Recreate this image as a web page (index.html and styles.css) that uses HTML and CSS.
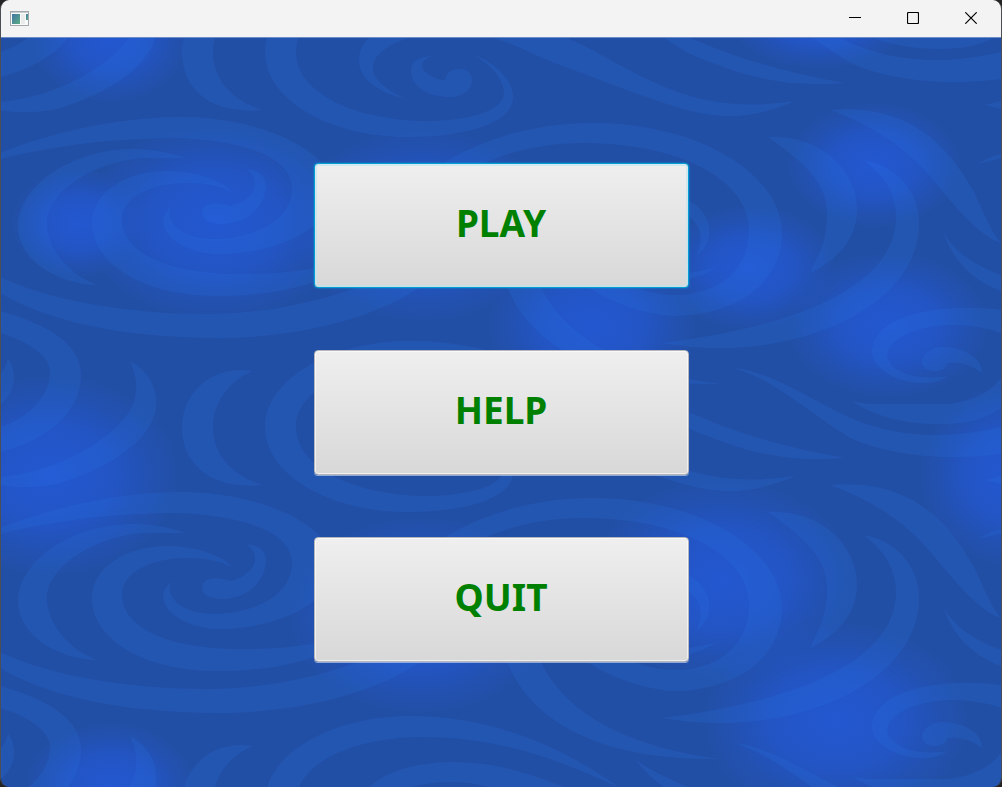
FILE: index.html
```
<!DOCTYPE html>
<html lang="en">
<head>
<meta charset="utf-8">
<title>Menu</title>
<link rel="stylesheet" href="styles.css">
</head>
<body>
<div class="window">
  <header class="titlebar">
    <svg class="app-icon" width="20" height="16" viewBox="0 0 20 16" aria-hidden="true">
      <defs>
        <linearGradient id="pane" x1="0" y1="0" x2="1" y2="1">
          <stop offset="0" stop-color="#4474a4"/>
          <stop offset="1" stop-color="#58ad83"/>
        </linearGradient>
      </defs>
      <rect x="1.5" y="0.5" width="18" height="14" fill="#fafafa" stroke="#a3a8ae"/>
      <path d="M2 1.5H19" stroke="#c9cdd2"/>
      <rect x="3" y="3" width="8" height="10" fill="url(#pane)"/>
      <rect x="12" y="3" width="4" height="10" fill="#e9ebec"/>
      <rect x="17" y="3" width="2" height="6" fill="url(#pane)"/>
    </svg>
    <div class="controls">
      <button class="control" type="button" aria-label="Minimize">
        <svg width="12" height="12" viewBox="0 0 12 12"><path d="M0 5.5H12"/></svg>
      </button>
      <button class="control" type="button" aria-label="Maximize">
        <svg width="12" height="12" viewBox="0 0 12 12"><rect x="0.5" y="0.5" width="11" height="11" rx="1"/></svg>
      </button>
      <button class="control" type="button" aria-label="Close">
        <svg width="12" height="12" viewBox="0 0 12 12"><path d="M0.3 0.3L11.7 11.7M11.7 0.3L0.3 11.7"/></svg>
      </button>
    </div>
  </header>
  <main class="stage">
    <svg class="backdrop" viewBox="1 38 1000 749" preserveAspectRatio="none" aria-hidden="true">
      <defs>
        <radialGradient id="glow">
          <stop offset="0" stop-color="#2358d3" stop-opacity="0.95"/>
          <stop offset="0.5" stop-color="#2357d0" stop-opacity="0.72"/>
          <stop offset="0.8" stop-color="#2356cc" stop-opacity="0.28"/>
          <stop offset="1" stop-color="#2356cc" stop-opacity="0"/>
        </radialGradient>
        <g id="swirls">
          <path d="M0 311C50 325 81 345 81 375C81 410 50 440 0 452V427C30 418 50 395 50 372C50 355 25 340 0 333Z"/>
          <path d="M8 358C18 372 16 392 0 405V374Q6 368 8 358Z"/>
          <path d="M130 361C150 372 158 390 156 408C152 440 110 468 57 484Q25 490 0 485V477C35 474 65 462 90 447C125 425 148 400 130 361Z"/>
          <path d="M253 371C205 364 182 400 182 427C182 465 212 490 262 485C232 475 213 455 213 427C213 402 230 380 253 371Z"/>
          <path d="M472 54C495 62 513 80 513 97C513 125 460 137 407 137C330 137 265 100 265 52C265 5 330 -34 410 -34C490 -34 560 -5 620 38C560 10 500 -13 423 -13C350 -13 296 15 296 52C296 95 360 121 427 121C465 121 504 112 504 93C504 80 492 65 472 54Z"/>
          <path d="M406 99C375 92 359 77 359 60C359 30 405 12 453 12C500 12 540 28 567 38C600 52 620 68 667 88Q725 112 795 101Q745 123 700 113C655 103 600 79 560 65C530 55 500 32 450 32C415 32 373 46 373 68C373 80 387 90 406 99Z"/>
          <path d="M635 9C650 22 690 38 720 50C760 65 800 75 845 83C780 88 745 75 710 62C680 52 650 30 635 9Z"/>
          <path d="M432 56C418 57 411 62 411 70C411 88 430 97 450 97C464 97 472 89 472 80C472 72 466 69 459 69C450 69 446 74 445 80C435 80 423 73 422 66Q422 60 432 56Z"/>
          <path d="M0 153C50 133 117 117 183 117C250 117 330 145 335 190C330 235 265 254 220 254C180 254 148 227 171 207C164 224 185 239 213 239C245 239 292 225 292 188C292 153 230 139 173 138C100 139 50 147 0 159Z"/>
          <path d="M185 158C175 154 155 149 133 149C70 149 18 187 18 227C18 258 55 284 97 285C70 275 47 250 47 223C47 190 100 158 150 158Z"/>
          <path d="M232 192C220 178 190 171 167 171C125 171 92 193 92 223C92 265 145 296 217 296C275 296 325 285 370 255L365 250C335 267 295 274 250 274C170 276 122 253 122 220C122 195 155 183 187 183Q215 183 232 192Z"/>
          <path d="M247 169C260 171 266 176 266 187C264 208 246 224 222 224C208 224 202 219 202 212C203 203 215 201 230 206C248 203 266 185 247 169Z"/>
          <path d="M0 277C50 301 130 314 208 314C270 314 340 298 385 275L440 270C400 312 310 338 217 338C120 338 45 320 0 293Z"/>
          <path d="M400 195C450 150 515 123 593 123C700 123 782 175 782 233C782 280 740 316 672 316C635 313 595 297 565 270L600 265C620 285 650 296 680 295C725 292 749 265 749 230C749 180 680 143 583 143C530 143 480 158 440 190Z"/>
          <path d="M500 260C510 325 570 386 720 384C610 370 545 325 532 260Z"/>
          <path d="M863 160C895 165 919 190 919 223C919 300 820 348 720 348Q690 348 662 343C800 326 896 285 896 217C896 195 885 175 863 160Z"/>
          <path d="M768 137C820 134 857 170 857 210C857 238 838 260 810 273C820 252 827 240 827 213C827 180 800 160 768 137Z"/>
          <path d="M830 110C920 102 955 160 973 190C985 215 990 230 1001 243C975 235 945 193 927 173C900 143 870 125 830 110Z"/>
          <path d="M944 233C955 253 975 265 1001 275V291C970 280 950 255 944 233Z"/>
          <path d="M1001 310C940 302 872 315 872 353C875 378 925 393 948 376C910 382 887 368 887 355C890 330 950 315 1001 333Z"/>
          <path d="M982 373C983 358 963 347 943 347C930 347 922 355 922 362C922 369 930 371 936 371Q944 371 948 363Q965 360 982 373Z"/>
          <path d="M852 401Q862 404 875 404H947Q985 400 1001 378V408C985 419 968 424 940 424C905 424 875 417 852 401Z"/>
          <path d="M733 368C763 370 800 392 830 408C870 430 925 445 1001 427V454C960 459 910 460 860 442C825 428 780 380 733 368Z"/>
          <path d="M985 105L1001 101V109Z"/>
          <path d="M978 164Q990 156 1002 154V158Z"/>
          <path d="M680 197C710 205 720 240 696 256C705 238 702 222 680 211Z"/>
          <path d="M680 274Q700 272 717 267Q700 278 680 281Z"/>
        </g>
      </defs>
      <g fill="url(#glow)">
        <ellipse cx="110" cy="38" rx="78" ry="64"/>
        <ellipse cx="78" cy="223" rx="66" ry="54"/>
        <ellipse cx="215" cy="222" rx="132" ry="98"/>
        <ellipse cx="423" cy="225" rx="130" ry="96"/>
        <ellipse cx="592" cy="325" rx="104" ry="80"/>
        <ellipse cx="750" cy="268" rx="86" ry="62"/>
        <ellipse cx="874" cy="165" rx="86" ry="62"/>
        <ellipse cx="888" cy="325" rx="100" ry="72"/>
        <ellipse cx="820" cy="20" rx="90" ry="48"/>
        <ellipse cx="50" cy="475" rx="128" ry="100"/>
        <ellipse cx="1010" cy="475" rx="90" ry="90"/>
        <ellipse cx="722" cy="580" rx="132" ry="100"/>
        <ellipse cx="836" cy="720" rx="132" ry="98"/>
        <ellipse cx="420" cy="615" rx="130" ry="98"/>
        <ellipse cx="110" cy="787" rx="84" ry="64"/>
      </g>
      <g class="swirl-layer">
        <use href="#swirls" y="-375"/>
        <use href="#swirls"/>
        <use href="#swirls" y="375"/>
        <use href="#swirls" y="750"/>
      </g>
    </svg>
    <nav class="menu" aria-label="Main menu">
      <button class="menu-button is-focused" type="button">PLAY</button>
      <button class="menu-button" type="button">HELP</button>
      <button class="menu-button" type="button">QUIT</button>
    </nav>
  </main>
</div>
</body>
</html>
```
FILE: styles.css
```
* {
  box-sizing: border-box;
}

body {
  margin: 0;
  background: #242424;
}

.window {
  display: flex;
  flex-direction: column;
  min-height: 100vh;
  border: solid #4b4e55;
  border-width: 0 1px;
  border-radius: 9px;
  overflow: hidden;
}

.titlebar {
  display: flex;
  align-items: center;
  justify-content: space-between;
  height: 38px;
  padding-left: 8px;
  background: #f3f3f3;
  border-bottom: 1px solid #6c8bcb;
}

.app-icon {
  display: block;
}

.controls {
  display: flex;
  height: 100%;
  padding-right: 1px;
}

.control {
  display: flex;
  align-items: center;
  justify-content: center;
  width: 58px;
  padding: 0 0 1px;
  border: 0;
  background: none;
}

.control svg {
  fill: none;
  stroke: #000;
  stroke-width: 1.2;
}

.stage {
  position: relative;
  flex: 1;
  display: grid;
  place-items: center;
  background: #224fa6;
}

.backdrop {
  position: absolute;
  inset: 0;
  width: 100%;
  height: 100%;
}

.swirl-layer {
  fill: #3080f0;
  fill-opacity: 0.15;
}

.menu {
  position: relative;
  display: flex;
  flex-direction: column;
  align-items: center;
  gap: 62px;
  width: 100%;
}

.menu-button {
  width: 37.5%;
  height: 125px;
  padding: 0 0 6px;
  border: 1px solid #b4b6bb;
  border-radius: 4px;
  background: linear-gradient(#efefef, #d8d8d8);
  box-shadow: inset 0 0 0 1px rgba(255, 255, 255, 0.6), 0 1px 0 rgba(255, 255, 255, 0.5);
  color: #008000;
  font: bold 37px/48px "Noto Sans", "Open Sans", sans-serif;
}

.is-focused {
  border-color: #039ed3;
  box-shadow: inset 0 0 0 2px rgba(190, 228, 240, 0.6), 0 0 2px #039ed3;
}
```
